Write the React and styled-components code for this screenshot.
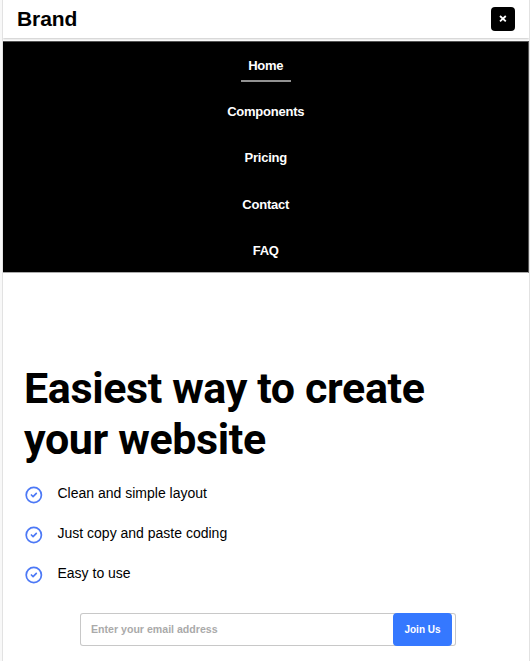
import React from "react";
import styled, { createGlobalStyle } from "styled-components";

const GlobalStyle = createGlobalStyle`
  * { box-sizing: border-box; }
  body { margin: 0; background: #f8f8f8; font-family: "Liberation Sans", Arial, sans-serif; color: #000; }
`;

const Page = styled.div`
  height: 661px;
  margin-left: 2px;
  border-left: 1px solid #e2e2e2;
  border-right: 1px solid #e2e2e2;
  background: #fff;
  overflow: hidden;
`;

const Header = styled.header`
  display: flex;
  align-items: center;
  justify-content: space-between;
  height: 38px;
  padding: 0 14px;
  background: #fff;
  box-shadow: 0 1px 2px rgba(0, 0, 0, 0.22);
`;

const Brand = styled.div`
  font-size: 21px;
  letter-spacing: -0.1px;
  line-height: 24px;
  font-weight: 700;
`;

const CloseButton = styled.button`
  display: flex;
  align-items: center;
  justify-content: center;
  width: 24px;
  height: 24px;
  padding: 0;
  border: 0;
  border-radius: 4px;
  background: #000;
  color: #fff;
`;

const Menu = styled.nav`
  display: flex;
  flex-direction: column;
  align-items: center;
  height: 232px;
  margin-top: 3px;
  padding-top: 8px;
  gap: 14.2px;
  background: #000;
  border: 1px solid #555;
  border-width: 1px 1px 1px 0;
  border-bottom-color: #aaa;
`;

const MenuLink = styled.a`
  height: 32px;
  padding: 0 7.5px;
  margin-left: 0.5px;
  border-bottom: 2px solid ${(p) => (p.$active ? "#929292" : "transparent")};
  color: #fff;
  font-size: 13px;
  letter-spacing: -0.22px;
  line-height: 31px;
  font-weight: 700;
`;

const Hero = styled.main`
  padding: 90px 21px 0;
`;

const Title = styled.h1`
  margin: 0;
  font-family: Roboto, sans-serif;
  font-size: 43px;
  letter-spacing: -0.38px;
  line-height: 51px;
  font-weight: 700;
`;

const Features = styled.ul`
  display: grid;
  gap: 20px;
  margin: 19px 0 0;
  padding: 0;
  list-style: none;
`;

const Feature = styled.li`
  display: flex;
  height: 20px;
  gap: 13.5px;
  font-size: 14px;
  line-height: 19px;
`;

const CheckIcon = styled.svg`
  width: 20px;
  height: 20px;
  margin-top: 1px;
  fill: none;
  stroke: #4d79f6;
  stroke-width: 1.7;
  stroke-linecap: round;
  stroke-linejoin: round;
`;

const Signup = styled.form`
  display: flex;
  width: 376px;
  height: 33px;
  margin: 29px 0 0 56px;
  padding-right: 4px;
  border-radius: 3px;
  box-shadow: inset 0 0 0 1px #c8c8c8;
`;

const EmailInput = styled.input`
  flex: 1;
  min-width: 0;
  padding: 0 11px 1px;
  border: 0;
  outline: 0;
  background: transparent;
  font: 700 10.6px "Liberation Sans", Arial, sans-serif;
  &::placeholder { color: #aaa; opacity: 1; }
`;

const JoinButton = styled.button`
  width: 59px;
  height: 33px;
  padding: 0;
  border: 0;
  border-radius: 4px;
  background: #3578ff;
  color: #fff;
  font: 700 10px "Liberation Sans", Arial, sans-serif;
`;

const links = ["Home", "Components", "Pricing", "Contact", "FAQ"];
const features = ["Clean and simple layout", "Just copy and paste coding", "Easy to use"];

export default function App() {
  return (
    <>
      <GlobalStyle />
      <Page>
        <Header>
          <Brand>Brand</Brand>
          <CloseButton aria-label="Close menu">
            <svg width="8" height="8" viewBox="0 0 8 8" stroke="#fff" strokeWidth="1.8">
              <path d="M1 1 6.8 6.4M6.8 1 1 6.4" />
            </svg>
          </CloseButton>
        </Header>
        <Menu>
          {links.map((label, i) => (
            <MenuLink key={label} $active={i === 0}>{label}</MenuLink>
          ))}
        </Menu>
        <Hero>
          <Title>Easiest way to create your website</Title>
          <Features>
            {features.map((text) => (
              <Feature key={text}>
                <CheckIcon viewBox="0 0 20 20">
                  <circle cx="9.8" cy="10" r="7.6" />
                  <path d="m7.4 10 1.7 1.6 3.2-3.2" />
                </CheckIcon>
                {text}
              </Feature>
            ))}
          </Features>
          <Signup onSubmit={(e) => e.preventDefault()}>
            <EmailInput type="email" placeholder="Enter your email address" />
            <JoinButton>Join Us</JoinButton>
          </Signup>
        </Hero>
      </Page>
    </>
  );
}
